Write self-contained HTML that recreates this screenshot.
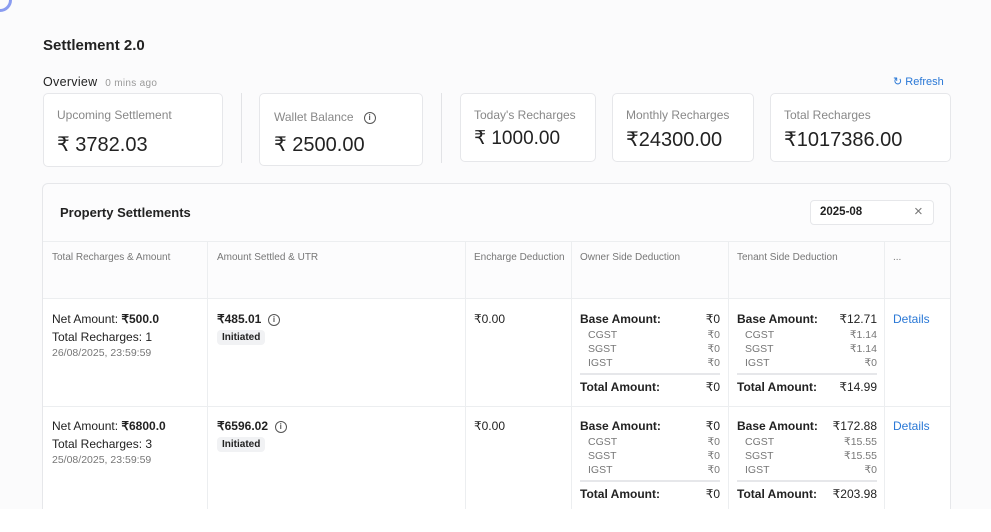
<!DOCTYPE html>
<html style="height:532px;overflow:hidden"><head><style>
body{margin:0;width:991px;height:532px;overflow:hidden;background:#fbfbfc;font-family:"Liberation Sans",sans-serif;color:#222;position:relative}
.a{position:absolute;white-space:nowrap}
.card{position:absolute;background:#fff;border:1px solid #e6e7ea;border-radius:5px;box-sizing:border-box}
.lbl{position:absolute;font-size:12px;color:#888}
.val{position:absolute;font-size:20px;color:#222}
.vd{position:absolute;width:1px;background:#e2e3e6}
.th{font-size:10px;color:#777}
.r{font-size:12px}
.sm{font-size:10.5px;color:#777}
.b{font-weight:bold}
.badge{background:#f1f2f4;border-radius:4px;font-size:10px;font-weight:bold;padding:2px 5px}
.info{display:inline-block;width:10px;height:10px;border:1.3px solid #555;border-radius:50%;font-size:8px;text-align:center;line-height:10px;font-weight:bold;color:#555;vertical-align:middle}
</style></head><body>
<div class="a" style="left:-12px;top:-12px;width:18px;height:18px;border-radius:50%;border:3px solid #8a9cf0"></div>
<div class="a b" style="left:43px;top:37px;font-size:15px">Settlement 2.0</div>
<div class="a" style="left:43px;top:75px;font-size:12.5px;letter-spacing:.3px">Overview <span style="font-size:10px;color:#999;margin-left:4px">0 mins ago</span></div>
<div class="a" style="left:893px;top:75px;font-size:11px;color:#2a78d6">&#8635; Refresh</div>

<div class="card" style="left:43px;top:93px;width:180px;height:74px"><div class="lbl" style="left:13px;top:14px">Upcoming Settlement</div><div class="val" style="left:13px;top:38px">₹ 3782.03</div></div>
<div class="vd" style="left:241px;top:93px;height:70px"></div>
<div class="card" style="left:259px;top:93px;width:164px;height:73px"><div class="lbl" style="left:14px;top:16px">Wallet Balance &nbsp;&nbsp;<span class="info">i</span></div><div class="val" style="left:14px;top:38px">₹ 2500.00</div></div>
<div class="vd" style="left:441px;top:93px;height:70px"></div>
<div class="card" style="left:460px;top:93px;width:136px;height:69px"><div class="lbl" style="left:13px;top:14px">Today's Recharges</div><div class="val" style="left:13px;top:33px;font-size:19px">₹ 1000.00</div></div>
<div class="card" style="left:612px;top:93px;width:142px;height:69px"><div class="lbl" style="left:13px;top:14px">Monthly Recharges</div><div class="val" style="left:13px;top:33px">₹24300.00</div></div>
<div class="card" style="left:770px;top:93px;width:181px;height:69px"><div class="lbl" style="left:13px;top:14px">Total Recharges</div><div class="val" style="left:13px;top:33px">₹1017386.00</div></div>

<div class="card" style="left:42px;top:183px;width:909px;height:335px;background:#fcfcfd;border-radius:6px"></div>
<div class="a" style="left:43px;top:298px;width:907px;height:215px;background:#fff"></div>
<div class="a b" style="left:60px;top:205px;font-size:13px">Property Settlements</div>
<div class="card" style="left:810px;top:200px;width:124px;height:25px;border-radius:4px"><div class="a b" style="left:9px;top:5px;font-size:11.5px">2025-08</div><div class="a" style="left:103px;top:2px;font-size:15px;color:#777">×</div></div>
<div class="a" style="left:43px;top:241px;width:907px;height:1px;background:#eceef0"></div>
<div class="a" style="left:43px;top:298px;width:907px;height:1px;background:#eceef0"></div>
<div class="a" style="left:43px;top:406px;width:907px;height:1px;background:#eceef0"></div>
<div class="vd" style="left:207px;top:242px;height:270px;background:#eceef0"></div>
<div class="vd" style="left:465px;top:242px;height:270px;background:#eceef0"></div>
<div class="vd" style="left:571px;top:242px;height:270px;background:#eceef0"></div>
<div class="vd" style="left:728px;top:242px;height:270px;background:#eceef0"></div>
<div class="vd" style="left:884px;top:242px;height:270px;background:#eceef0"></div>

<div class="a th" style="left:52px;top:252px">Total Recharges &amp; Amount</div>
<div class="a th" style="left:217px;top:252px">Amount Settled &amp; UTR</div>
<div class="a th" style="left:474px;top:252px">Encharge Deduction</div>
<div class="a th" style="left:580px;top:252px">Owner Side Deduction</div>
<div class="a th" style="left:737px;top:252px">Tenant Side Deduction</div>
<div class="a th" style="left:893px;top:252px">...</div>

<div class="a r" style="left:52px;top:312px">Net Amount: <b>₹500.0</b></div>
<div class="a r" style="left:52px;top:330px">Total Recharges: 1</div>
<div class="a sm" style="left:52px;top:347px">26/08/2025, 23:59:59</div>
<div class="a r b" style="left:217px;top:312px">₹485.01 &nbsp;<span class="info">i</span></div>
<div class="a badge" style="left:217px;top:330px">Initiated</div>
<div class="a r" style="left:474px;top:312px">₹0.00</div>

<div class="a r" style="left:52px;top:419px">Net Amount: <b>₹6800.0</b></div>
<div class="a r" style="left:52px;top:437px">Total Recharges: 3</div>
<div class="a sm" style="left:52px;top:454px">25/08/2025, 23:59:59</div>
<div class="a r b" style="left:217px;top:419px">₹6596.02 &nbsp;<span class="info">i</span></div>
<div class="a badge" style="left:217px;top:437px">Initiated</div>
<div class="a r" style="left:474px;top:419px">₹0.00</div>

<script>
function blk(x,y,w,v){
 var s='<div class="a r b" style="left:'+x+'px;top:'+y+'px">Base Amount:</div><div class="a r" style="left:'+x+'px;width:'+w+'px;text-align:right;top:'+y+'px">'+v[0]+'</div>';
 var n=['CGST','SGST','IGST'];
 for(var i=0;i<3;i++){s+='<div class="a sm" style="left:'+(x+8)+'px;top:'+(y+17+i*14)+'px">'+n[i]+'</div><div class="a sm" style="left:'+x+'px;width:'+w+'px;text-align:right;top:'+(y+17+i*14)+'px">'+v[i+1]+'</div>';}
 s+='<div class="a" style="left:'+x+'px;top:'+(y+61)+'px;width:'+w+'px;height:2px;background:#e6e7ea"></div>';
 s+='<div class="a r b" style="left:'+x+'px;top:'+(y+68)+'px">Total Amount:</div><div class="a r" style="left:'+x+'px;width:'+w+'px;text-align:right;top:'+(y+68)+'px">'+v[4]+'</div>';
 document.write(s);
}
blk(580,312,140,['₹0','₹0','₹0','₹0','₹0']);
blk(737,312,140,['₹12.71','₹1.14','₹1.14','₹0','₹14.99']);
blk(580,419,140,['₹0','₹0','₹0','₹0','₹0']);
blk(737,419,140,['₹172.88','₹15.55','₹15.55','₹0','₹203.98']);
</script>
<div class="a r" style="left:893px;top:312px;color:#2a78d6">Details</div>
<div class="a r" style="left:893px;top:419px;color:#2a78d6">Details</div>
<div class="a" style="left:0;top:509px;width:991px;height:23px;background:#fff"></div>
</body></html>
